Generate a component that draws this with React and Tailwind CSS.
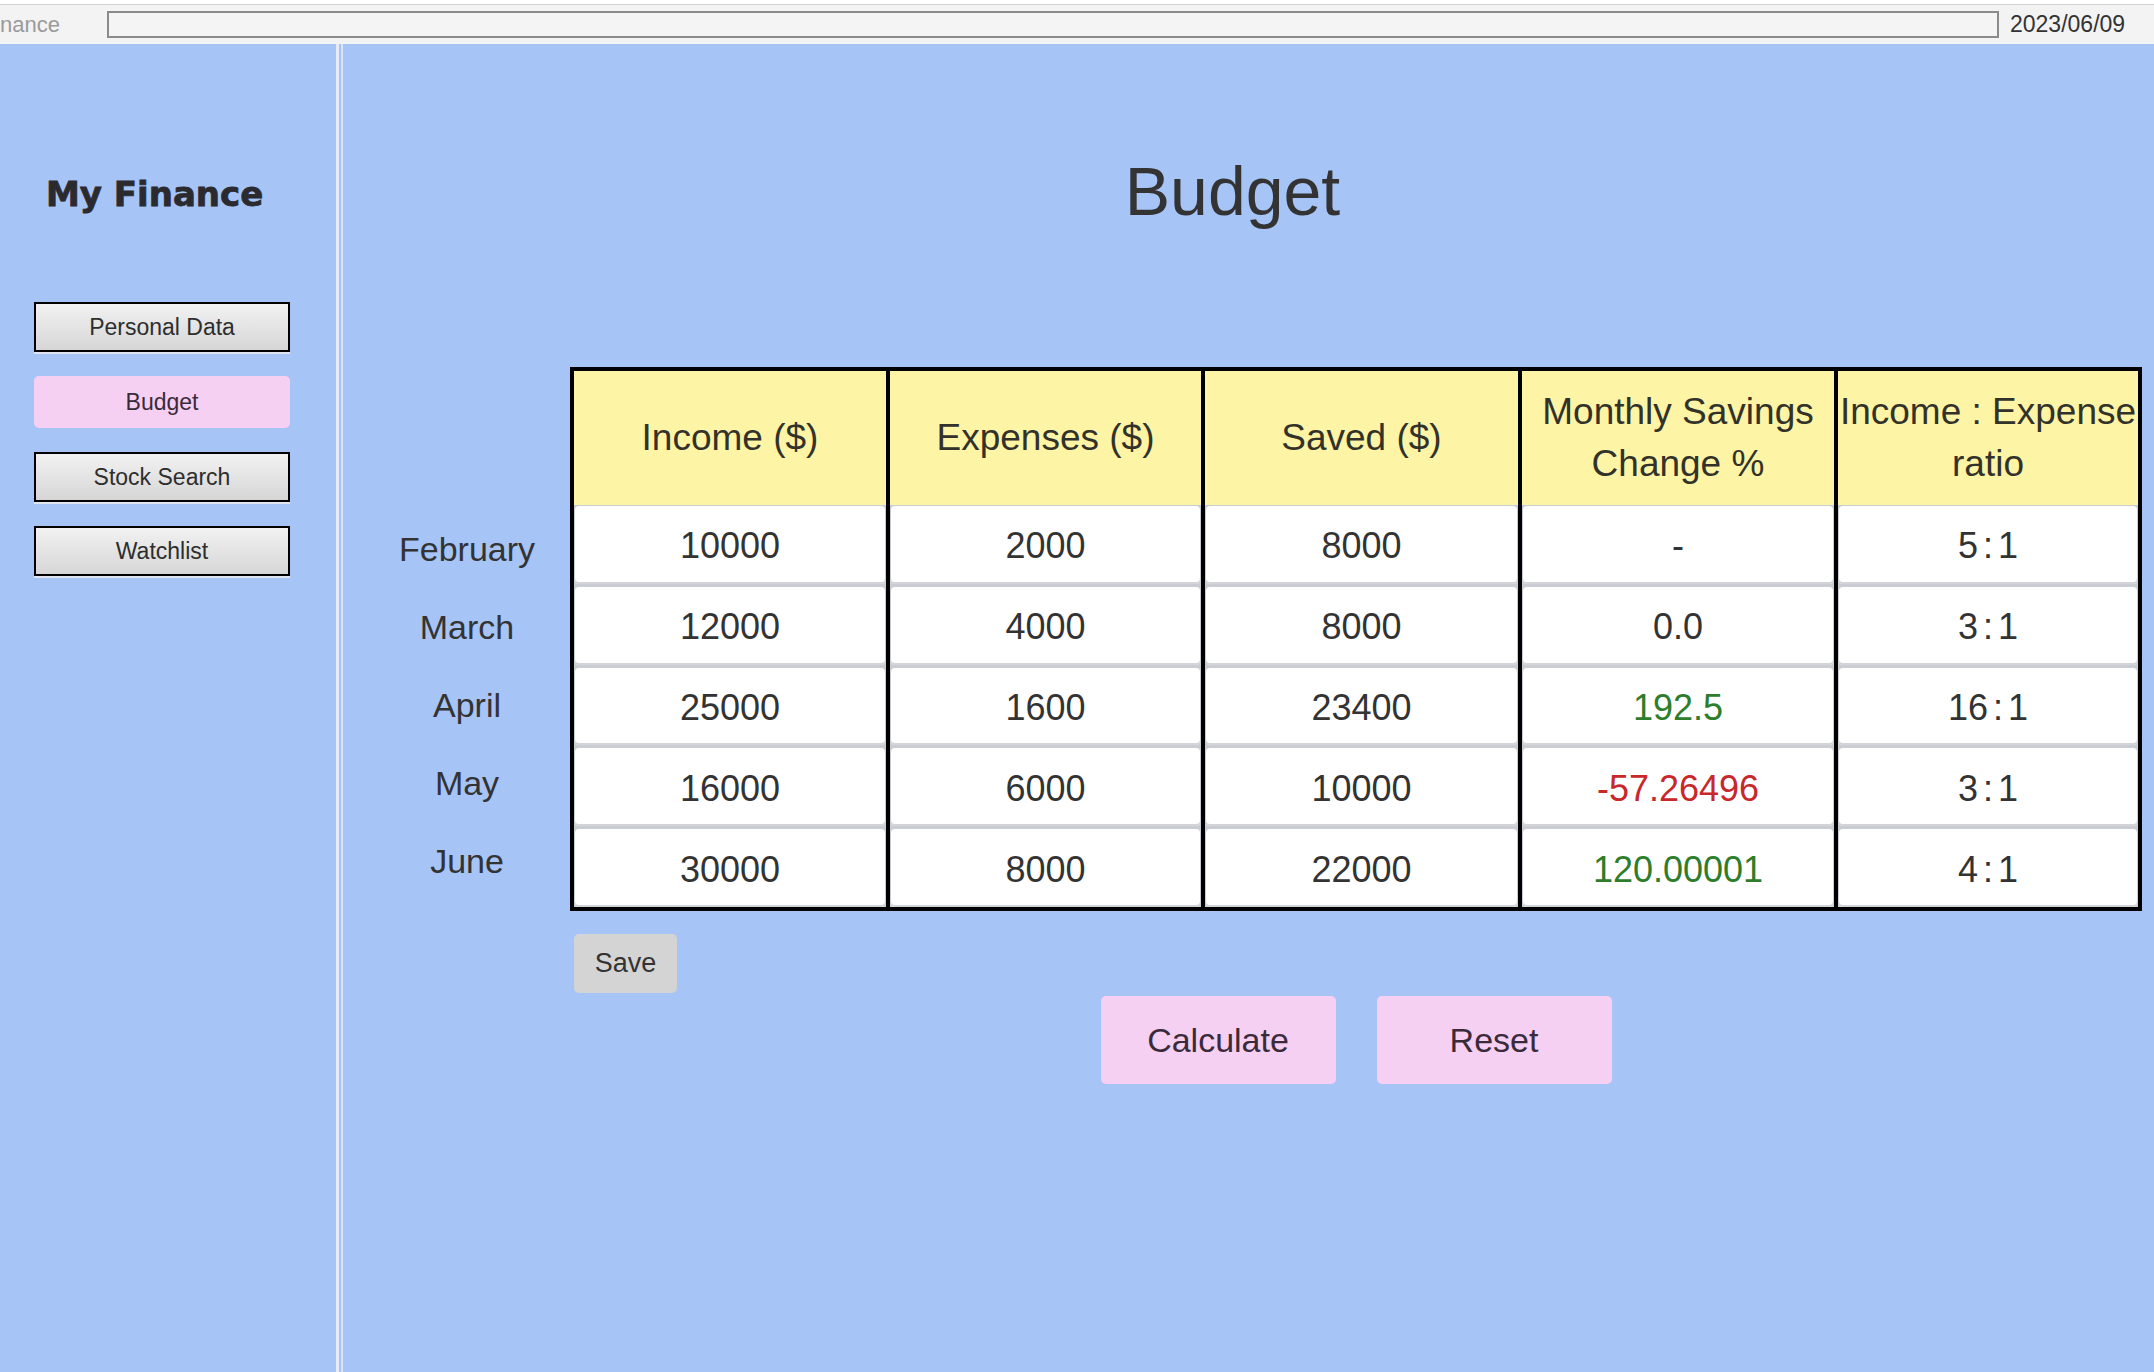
import React from "react"

const months = ["February", "March", "April", "May", "June"]

const columns = [
  { head: ["Income ($)"], values: ["10000", "12000", "25000", "16000", "30000"] },
  { head: ["Expenses ($)"], values: ["2000", "4000", "1600", "6000", "8000"] },
  { head: ["Saved ($)"], values: ["8000", "8000", "23400", "10000", "22000"] },
  {
    head: ["Monthly Savings", "Change %"],
    values: ["-", "0.0", "192.5", "-57.26496", "120.00001"],
    colors: ["", "", "text-[#2e7d2a]", "text-[#c8282a]", "text-[#2e7d2a]"],
  },
  { head: ["Income : Expense", "ratio"], values: ["5 : 1", "3 : 1", "16 : 1", "3 : 1", "4 : 1"], tight: true },
]

const NavButton = ({ label, active }) => {
  if (active) {
    return (
      <div className="w-[256px] h-[52px] rounded-[5px] bg-[#f6d0f3] flex items-center justify-center text-[23px] text-[#3a2b3a]">
        {label}
      </div>
    )
  }
  return (
    <div className="w-[256px] h-[50px] border-2 border-black bg-gradient-to-b from-[#f2f2f2] to-[#d6d6d6] shadow-[0_2px_0_#dfe5ef] flex items-center justify-center text-[23px] text-[#2e2e2e]">
      {label}
    </div>
  )
}

const Sidebar = () => (
  <div className="w-[336px] flex flex-col">
    <div className="pt-[125px] pl-[46px] h-[50px] box-content leading-[50px] text-[34px] font-bold text-[#2b2b2f] [-webkit-text-stroke:0.8px_#2b2b2f] [font-family:'DejaVu_Sans',sans-serif]">
      My Finance
    </div>
    <div className="mt-[83px] pl-[34px] flex flex-col gap-[24px]">
      <NavButton label="Personal Data" />
      <NavButton label="Budget" active />
      <NavButton label="Stock Search" />
      <NavButton label="Watchlist" />
    </div>
  </div>
)

const BudgetTable = () => (
  <div className="w-[1572px] border-4 border-black bg-black grid grid-cols-[312px_311px_313px_312px_1fr] gap-x-[4px]">
    {columns.map((col, ci) => (
      <div key={ci} className="flex flex-col">
        <div className="h-[134px] bg-[#fdf5a5] flex flex-col items-center justify-center text-[37px] leading-[52px] text-[#33322a] whitespace-nowrap">
          {col.head.map((h) => (
            <div key={h}>{h}</div>
          ))}
        </div>
        <div className="h-[402px] bg-[#c9ccd3] flex flex-col gap-[3px] pt-[1px]">
          {col.values.map((v, ri) => (
            <div
              key={ri}
              className={`flex-1 mx-[1px] pt-[3px] rounded-[4px] bg-white shadow-[inset_0_-2px_0_#d2d4d8] flex items-center justify-center text-[36px] ${
                col.tight ? "[word-spacing:-5px]" : ""
              } ${(col.colors && col.colors[ri]) || "text-[#333]"}`}
            >
              {v}
            </div>
          ))}
        </div>
      </div>
    ))}
  </div>
)

export default function App() {
  return (
    <div className="w-[2154px] h-[1372px] overflow-hidden flex flex-col bg-[#a7c4f7] [font-family:'Liberation_Sans',Arial,sans-serif]">
      {/* top bar */}
      <div className="pt-[4px] bg-white">
        <div className="h-[40px] border-t border-[#d2d2d2] bg-[#f3f3f3] flex items-center">
          <div className="w-[107px] text-[22px] text-[#9a9a9a] overflow-hidden whitespace-nowrap">nance</div>
          <div className="w-[1892px] h-[27px] border-2 border-[#8a8a8a] bg-[#f4f4f4]" />
          <div className="ml-[11px] text-[23px] text-[#333]">2023/06/09</div>
        </div>
      </div>

      <div className="flex-1 flex min-h-0">
        <Sidebar />
        {/* divider */}
        <div className="w-[3px] bg-[#e6ecf7]" />
        <div className="w-[2px]" />
        <div className="w-[2px] bg-[#dbe4f4]" />

        <div className="flex-1 flex flex-col">
          <div className="pt-[107px] pr-[32px] text-center text-[68px] leading-[80px] text-[#333]">Budget</div>

          <div className="mt-[136px] pl-[21px] flex">
            <div className="w-[206px] pt-[143px] flex flex-col">
              {months.map((m) => (
                <div key={m} className="h-[78.2px] flex items-center justify-center text-[34px] text-[#333]">
                  {m}
                </div>
              ))}
            </div>

            <div className="flex flex-col">
              <BudgetTable />
              <div className="mt-[23px] ml-[4px] w-[103px] h-[59px] rounded-[5px] bg-[#d4d4d4] flex items-center justify-center text-[27px] text-[#333]">
                Save
              </div>
              <div className="mt-[3px] flex justify-center gap-[41px]">
                <div className="w-[235px] h-[88px] rounded-[5px] bg-[#f6d0f3] flex items-center justify-center text-[34px] text-[#3a2b3a]">
                  Calculate
                </div>
                <div className="w-[235px] h-[88px] rounded-[5px] bg-[#f6d0f3] flex items-center justify-center text-[34px] text-[#3a2b3a]">
                  Reset
                </div>
              </div>
            </div>
          </div>
        </div>
      </div>
    </div>
  )
}
